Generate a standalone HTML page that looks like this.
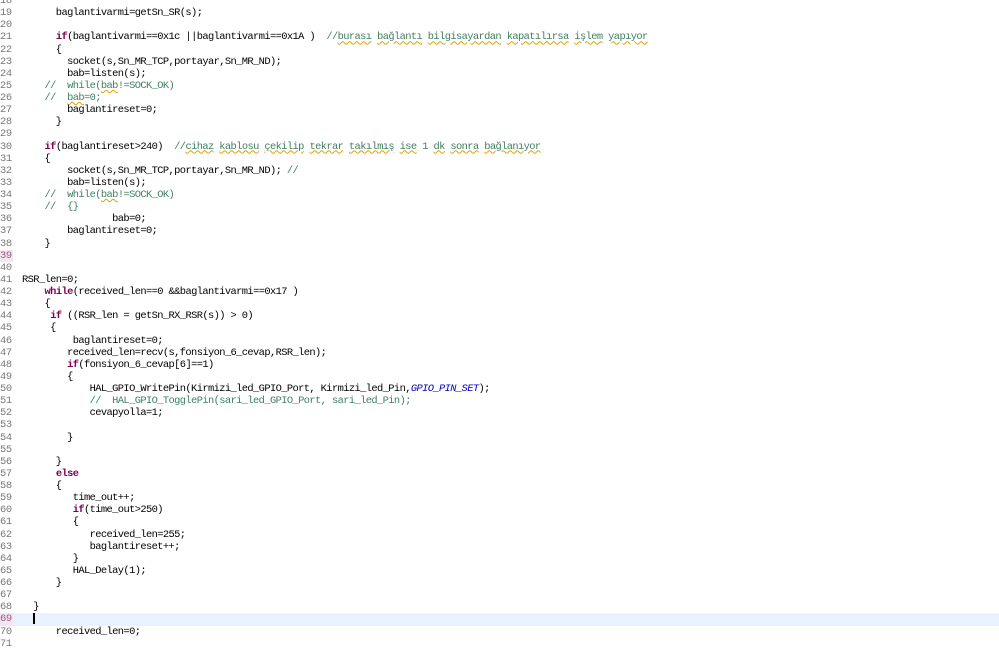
<!DOCTYPE html>
<html><head><style>
body{margin:0;width:999px;height:646px;overflow:hidden;background:#fff;font-family:"Liberation Mono",monospace;font-size:10.4px;letter-spacing:-0.6px;}
#c{position:absolute;top:-5px;left:0;width:999px;}
.l{height:12.14px;line-height:12.14px;white-space:pre;position:relative;color:#000;}
.n{position:absolute;left:0;width:14px;color:#787878;text-align:left;letter-spacing:-0.3px;}
.t{position:absolute;left:22px;}
.k{color:#7f0055;font-weight:bold;}
.c{color:#3f7f5f;}
.i{color:#0000c0;font-style:italic;}
.u{text-decoration:underline wavy #e0a000;text-decoration-thickness:1px;}
.hl{background:#e8f2fe;}
.hl .n,.p .n{color:#9a5a8a;background:#f4e6f0;width:13px;}
</style></head><body><div id="c">
<div class="l"><span class="n">18</span><span class="t"></span></div>
<div class="l"><span class="n">19</span><span class="t">      baglantivarmi=getSn_SR(s);</span></div>
<div class="l"><span class="n">20</span><span class="t"></span></div>
<div class="l"><span class="n">21</span><span class="t">      <span class="k">if</span>(baglantivarmi==0x1c ||baglantivarmi==0x1A )  <span class="c">//<span class="u">burası</span> <span class="u">bağlantı</span> <span class="u">bilgisayardan</span> <span class="u">kapatılırsa</span> <span class="u">işlem</span> <span class="u">yapıyor</span></span></span></div>
<div class="l"><span class="n">22</span><span class="t">      {</span></div>
<div class="l"><span class="n">23</span><span class="t">        socket(s,Sn_MR_TCP,portayar,Sn_MR_ND);</span></div>
<div class="l"><span class="n">24</span><span class="t">        bab=listen(s);</span></div>
<div class="l"><span class="n">25</span><span class="t"><span class="c">    //  while(<span class="u">bab</span>!=SOCK_OK)</span></span></div>
<div class="l"><span class="n">26</span><span class="t"><span class="c">    //  <span class="u">bab</span>=0;</span></span></div>
<div class="l"><span class="n">27</span><span class="t">        baglantireset=0;</span></div>
<div class="l"><span class="n">28</span><span class="t">      }</span></div>
<div class="l"><span class="n">29</span><span class="t"></span></div>
<div class="l"><span class="n">30</span><span class="t">    <span class="k">if</span>(baglantireset&gt;240)  <span class="c">//<span class="u">cihaz</span> <span class="u">kablosu</span> <span class="u">çekilip</span> <span class="u">tekrar</span> <span class="u">takılmış</span> <span class="u">ise</span> 1 <span class="u">dk</span> <span class="u">sonra</span> <span class="u">bağlanıyor</span></span></span></div>
<div class="l"><span class="n">31</span><span class="t">    {</span></div>
<div class="l"><span class="n">32</span><span class="t">        socket(s,Sn_MR_TCP,portayar,Sn_MR_ND); <span class="c">//</span></span></div>
<div class="l"><span class="n">33</span><span class="t">        bab=listen(s);</span></div>
<div class="l"><span class="n">34</span><span class="t"><span class="c">    //  while(<span class="u">bab</span>!=SOCK_OK)</span></span></div>
<div class="l"><span class="n">35</span><span class="t"><span class="c">    //  {}</span></span></div>
<div class="l"><span class="n">36</span><span class="t">                bab=0;</span></div>
<div class="l"><span class="n">37</span><span class="t">        baglantireset=0;</span></div>
<div class="l"><span class="n">38</span><span class="t">    }</span></div>
<div class="l p"><span class="n">39</span><span class="t"></span></div>
<div class="l"><span class="n">40</span><span class="t"></span></div>
<div class="l"><span class="n">41</span><span class="t">RSR_len=0;</span></div>
<div class="l"><span class="n">42</span><span class="t">    <span class="k">while</span>(received_len==0 &amp;&amp;baglantivarmi==0x17 )</span></div>
<div class="l"><span class="n">43</span><span class="t">    {</span></div>
<div class="l"><span class="n">44</span><span class="t">     <span class="k">if</span> ((RSR_len = getSn_RX_RSR(s)) &gt; 0)</span></div>
<div class="l"><span class="n">45</span><span class="t">     {</span></div>
<div class="l"><span class="n">46</span><span class="t">         baglantireset=0;</span></div>
<div class="l"><span class="n">47</span><span class="t">        received_len=recv(s,fonsiyon_6_cevap,RSR_len);</span></div>
<div class="l"><span class="n">48</span><span class="t">        <span class="k">if</span>(fonsiyon_6_cevap[6]==1)</span></div>
<div class="l"><span class="n">49</span><span class="t">        {</span></div>
<div class="l"><span class="n">50</span><span class="t">            HAL_GPIO_WritePin(Kirmizi_led_GPIO_Port, Kirmizi_led_Pin,<span class="i">GPIO_PIN_SET</span>);</span></div>
<div class="l"><span class="n">51</span><span class="t">            <span class="c">//  HAL_GPIO_TogglePin(sari_led_GPIO_Port, sari_led_Pin);</span></span></div>
<div class="l"><span class="n">52</span><span class="t">            cevapyolla=1;</span></div>
<div class="l"><span class="n">53</span><span class="t"></span></div>
<div class="l"><span class="n">54</span><span class="t">        }</span></div>
<div class="l"><span class="n">55</span><span class="t"></span></div>
<div class="l"><span class="n">56</span><span class="t">      }</span></div>
<div class="l"><span class="n">57</span><span class="t">      <span class="k">else</span></span></div>
<div class="l"><span class="n">58</span><span class="t">      {</span></div>
<div class="l"><span class="n">59</span><span class="t">         time_out++;</span></div>
<div class="l"><span class="n">60</span><span class="t">         <span class="k">if</span>(time_out&gt;250)</span></div>
<div class="l"><span class="n">61</span><span class="t">         {</span></div>
<div class="l"><span class="n">62</span><span class="t">            received_len=255;</span></div>
<div class="l"><span class="n">63</span><span class="t">            baglantireset++;</span></div>
<div class="l"><span class="n">64</span><span class="t">         }</span></div>
<div class="l"><span class="n">65</span><span class="t">         HAL_Delay(1);</span></div>
<div class="l"><span class="n">66</span><span class="t">      }</span></div>
<div class="l"><span class="n">67</span><span class="t"></span></div>
<div class="l"><span class="n">68</span><span class="t">  }</span></div>
<div class="l hl"><span class="n">69</span><span class="t"><span style="display:inline-block;width:2px;height:11px;background:#000;vertical-align:middle;margin-left:11px"></span></span></div>
<div class="l"><span class="n">70</span><span class="t">      received_len=0;</span></div>
<div class="l"><span class="n">71</span><span class="t"></span></div>
</div></body></html>
